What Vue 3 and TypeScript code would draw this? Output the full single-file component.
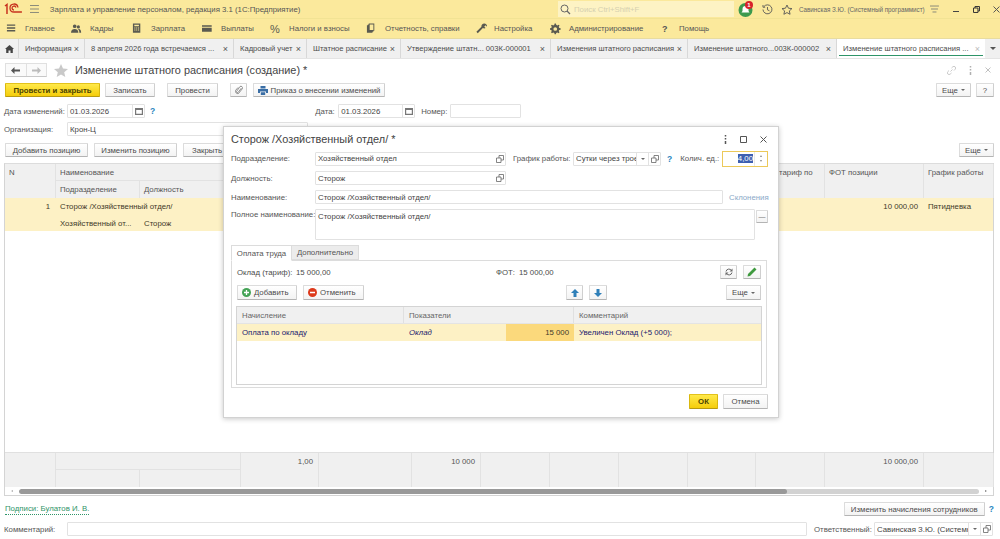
<script setup lang="ts">
interface MenuItem { label: string; icon: string; w: number }
interface TabItem { label: string; w: number; active?: boolean }

const menu: MenuItem[] = [
  { label: 'Главное', icon: 'M1 1h9v1.6H1zM1 4h9v1.6H1zM1 7h9v1.6H1z', w: 65 },
  { label: 'Кадры', icon: 'M4 1a2 2 0 1 1 0 4 2 2 0 0 1 0-4zM8 2a1.7 1.7 0 1 1 0 3.4A1.7 1.7 0 0 1 8 2zM0 10c0-3 2-4 4-4s4 1 4 4zM8.6 6c1.5 0 2.4 1.200 2.400 4H9c0-2-.5-3-1.500-3.600z', w: 61 },
  { label: 'Зарплата', icon: 'M1 0h8v10H1zM2.500 1.500v1.500h5V1.500zM2.500 4.500v1h1.200v-1zM4.500 4.500v1h1.200v-1zM6.500 4.500v1h1.200v-1zM2.500 6.500v1h1.200v-1zM4.500 6.500v1h1.200v-1zM6.500 6.500v1h1.200v-1z', w: 70 },
  { label: 'Выплаты', icon: 'M0 2h10.500v7H0zM0 3.500v1.200h10.500V3.500z', w: 68 },
  { label: 'Налоги и взносы', icon: '', w: 96 },
  { label: 'Отчетность, справки', icon: 'M3 0h6v8H8v1H7v1H1V2h1V1h1zM4 1v6h4V1z', w: 109 },
  { label: 'Настройка', icon: 'M10 0a3 3 0 0 1 3 3.500L11.500 2 10 3.500 11.500 5A3 3 0 0 1 8.500 5L3 10.500 1.500 9 7 3.500A3 3 0 0 1 10 0z', w: 75 },
  { label: 'Администрирование', icon: 'M5 0h1.400l.3 1.500 1.300.6L9.300 1.300l1 1L9.500 3.600l.5 1.400 1.500.3v1.400L10 7l-.5 1.300.8 1.300-1 1-1.300-.8-1.300.5-.3 1.500H5l-.3-1.500-1.300-.5-1.300.8-1-1 .8-1.300L1.400 7 0 6.700V5.300l1.400-.3.500-1.400-.8-1.300 1-1 1.300.8L4.700 1.500zM5.700 4a2 2 0 1 0 0 4 2 2 0 0 0 0-4z', w: 110 },
]

const tabs: TabItem[] = [
  { label: 'Информация', w: 66 },
  { label: '8 апреля 2026 года встречаемся ...', w: 149 },
  { label: 'Кадровый учет', w: 73 },
  { label: 'Штатное расписание', w: 94 },
  { label: 'Утверждение штатн... 003К-000001', w: 150 },
  { label: 'Изменения штатного расписания', w: 137 },
  { label: 'Изменение штатного...003К-000002', w: 149 },
  { label: 'Изменение штатного расписания ...', w: 148, active: true },
]

const headCols: string[] = ['', '', '', '', '', '', '', 'тариф по', 'ФОТ позиции', 'График работы']
const bodyCols: string[] = ['', '', '', '', '', '', '', '', '10 000,00', 'Пятидневка']
const footCols: string[] = ['1,00', '', '10 000', '', '', '', '', '', '10 000,00', '']
</script>

<template>
  <div class="app">
    <header class="titlebar">
      <svg class="logo" width="18" height="12" viewBox="0 0 18 12">
        <path d="M1 3l2-1.500V11" fill="none" stroke="#c8321e" stroke-width="1.500" />
        <path d="M14 4.500A4 4 0 1 0 10 9h8M12 4.500A2 2 0 1 0 10 7" fill="none" stroke="#c8321e" stroke-width="1.300" />
      </svg>
      <svg class="burger" width="9" height="8" viewBox="0 0 9 8"><path d="M0 .5h9M0 4h9M0 7.500h9" stroke="#8a8a7a" stroke-width="1" /></svg>
      <span class="apptitle">Зарплата и управление персоналом, редакция 3.1 (1С:Предприятие)</span>
      <div class="search">
        <svg width="11" height="11" viewBox="0 0 11 11"><circle cx="4.500" cy="4.500" r="3.500" fill="none" stroke="#666" stroke-width="1" /><path d="M7 7l3 3" stroke="#666" stroke-width="1.300" /></svg>
        <span>Поиск Ctrl+Shift+F</span>
      </div>
      <div class="bell">
        <svg width="15" height="15" viewBox="0 0 15 15"><circle cx="7.500" cy="8" r="7" fill="#3c9a4e" /><path d="M7.500 4a3 3 0 0 1 3 3v2l1 1.500h-8L4.500 9V7a3 3 0 0 1 3-3z" fill="#fff" /></svg>
        <b class="badge">1</b>
      </div>
      <svg class="tb-history" width="11" height="11" viewBox="0 0 11 11"><path d="M2 2.500A4.500 4.500 0 1 1 1 5.500M1 1v2.200h2.200M5.500 3v2.800l2 1" fill="none" stroke="#555" stroke-width=".9" /></svg>
      <svg class="tb-star" width="12" height="11" viewBox="0 0 12 11"><path d="M6 1l1.500 3.200 3.500.4-2.600 2.300.7 3.400L6 8.600l-3.100 1.700.7-3.400L1 4.600l3.500-.4z" fill="none" stroke="#555" stroke-width=".9" /></svg>
      <span class="user">Савинская З.Ю. (Системный программист)</span>
      <svg class="tb-menu" width="9" height="9" viewBox="0 0 9 9"><path d="M0 1h9M1 4h7M2.500 7h4" stroke="#8a8a7a" stroke-width="1" /></svg>
      <span class="tb-min"></span>
      <svg class="tb-rest" width="7" height="7" viewBox="0 0 7 7"><path d="M2 2V.5h4.500V5H5M.5 2H5v4.500H.5z" fill="none" stroke="#333" stroke-width="1" /></svg>
      <svg class="tb-close" width="7" height="7" viewBox="0 0 7 7"><path d="M.5.5l6 6M6.500.5l-6 6" stroke="#555" stroke-width="1" /></svg>
    </header>

    <nav class="sections">
      <div v-for="m in menu" :key="m.label" class="sec" :style="{ width: m.w + 'px' }">
        <span class="secicon">
          <svg v-if="m.icon" width="12" height="12" viewBox="0 0 13 12"><path :d="m.icon" fill="#5a5a50" fill-rule="evenodd" /></svg>
          <b v-else class="pct">%</b>
        </span>
        <span>{{ m.label }}</span>
      </div>
      <div class="sec">
        <span class="secicon"><b class="q">?</b></span>
        <span>Помощь</span>
      </div>
    </nav>

    <div class="tabs">
      <div class="home">
        <svg width="9" height="8" viewBox="0 0 9 8"><path d="M4.500 0L9 4H7.800v4H5.500V5.500h-2V8H1.200V4H0z" fill="#444" /></svg>
      </div>
      <div v-for="t in tabs" :key="t.label" class="tab" :class="{ active: t.active }" :style="{ width: t.w + 'px' }">
        <span class="tabtext">{{ t.label }}</span>
        <span class="tabx">×</span>
      </div>
      <div class="tabmore"><i class="caret dark"></i></div>
    </div>

    <main class="page">
      <div class="headrow">
        <div class="navbtns">
          <span><svg width="9" height="7" viewBox="0 0 9 7"><path d="M3.500 0v2.500H9v2H3.500V7L0 3.500z" fill="#555" /></svg></span>
          <span><svg width="9" height="7" viewBox="0 0 9 7"><path d="M5.500 0v2.500H0v2h5.500V7L9 3.500z" fill="#bbb" /></svg></span>
        </div>
        <svg class="star" width="14" height="13" viewBox="0 0 14 13"><path d="M7 0l2 4.500 5 .5-3.800 3.200L11.300 13 7 10.500 2.700 13l1.100-4.800L0 5l5-.5z" fill="#c9c9c9" /></svg>
        <h1>Изменение штатного расписания (создание) *</h1>
        <div class="headicons">
          <svg width="9" height="9" viewBox="0 0 9 9"><path d="M3.500 5.500l2-2M2 4.500L.8 5.700a1.700 1.700 0 0 0 2.400 2.400L4.500 7M4.500 2L5.800.8a1.700 1.700 0 0 1 2.400 2.400L7 4.500" fill="none" stroke="#c4c4c4" stroke-width=".9" /></svg>
          <svg width="3" height="9" viewBox="0 0 3 9"><path d="M1.500 0v1.500M1.500 3v1.500M1.500 6v3" stroke="#b0b0b0" stroke-width="1.500" /></svg>
          <svg width="6" height="6" viewBox="0 0 6 6"><path d="M.5.500l5 5M5.500.500l-5 5" stroke="#c0c0c0" stroke-width="1" /></svg>
        </div>
      </div>

      <div class="cmdrow">
        <button class="btn yellow w95">Провести и закрыть</button>
        <button class="btn w50 ml5">Записать</button>
        <button class="btn w51 ml12">Провести</button>
        <button class="btn w17 ml12 btnicon">
          <svg width="8" height="10" viewBox="0 0 8 10"><path d="M6.500 3L3 7.500a1 1 0 0 1-1.500-1L5 1.500a1.700 1.700 0 0 1 2.500 2L3.500 8.500A2.400 2.400 0 0 1 .5 5.500L3 2.500" fill="none" stroke="#777" stroke-width=".8" /></svg>
        </button>
        <button class="btn w132 ml6 btnprint">
          <svg width="10" height="9" viewBox="0 0 10 9"><path d="M2.500 0h5v2.500h-5zM0 3h10v4H8V5.500H2V7H0zM2.800 6.200h4.400V9H2.800z" fill="#3a6ea5" /></svg>
          Приказ о внесении изменений
        </button>
        <span class="grow"></span>
        <button class="btn w35">Еще <i class="caret"></i></button>
        <button class="btn w18 ml5">?</button>
      </div>

      <div class="fieldrow">
        <label class="lab w63">Дата изменений:</label>
        <div class="inp w78"><span class="grow">01.03.2026</span><span class="cell"><svg width="8" height="8" viewBox="0 0 8 8"><path d="M0 1h8v7H0zM1.200 3v3.800h5.600V3z" fill="#777" fill-rule="evenodd" /></svg></span></div>
        <span class="help ml5">?</span>
        <label class="lab date-lab">Дата:</label>
        <div class="inp w77"><span class="grow">01.03.2026</span><span class="cell"><svg width="8" height="8" viewBox="0 0 8 8"><path d="M0 1h8v7H0zM1.200 3v3.800h5.600V3z" fill="#777" fill-rule="evenodd" /></svg></span></div>
        <label class="lab num-lab">Номер:</label>
        <div class="inp w71"></div>
      </div>

      <div class="fieldrow org">
        <label class="lab w63">Организация:</label>
        <div class="inp w241">Крон-Ц</div>
      </div>

      <div class="cmdrow list">
        <button class="btn w83">Добавить позицию</button>
        <button class="btn w83 ml6">Изменить позицию</button>
        <button class="btn w83 ml6 btnstart">Закрыть</button>
        <span class="grow"></span>
        <button class="btn w35">Еще <i class="caret"></i></button>
      </div>

      <section class="grid">
        <div class="mgrid ghead">
          <div class="gc sp2">N</div>
          <div class="gc c2">Наименование</div>
          <div v-for="(c, i) in headCols" :key="'h' + i" class="gc sp2" :class="{ tar: c === 'тариф по' }">{{ c }}</div>
          <div class="gc">Подразделение</div>
          <div class="gc">Должность</div>
        </div>
        <div class="mgrid gbody">
          <div class="gc sp2 right">1</div>
          <div class="gc c2 dk">Сторож /Хозяйственный отдел/</div>
          <div v-for="(c, i) in bodyCols" :key="'b' + i" class="gc sp2 dk" :class="{ right: c === '10 000,00' }">{{ c }}</div>
          <div class="gc dk">Хозяйственный от...</div>
          <div class="gc dk">Сторож</div>
        </div>
        <div class="gspacer"></div>
        <div class="mgrid gfoot">
          <div class="gc sp2"></div>
          <div class="gc c2"></div>
          <div v-for="(c, i) in footCols" :key="'f' + i" class="gc sp2 right">{{ c }}</div>
          <div class="gc"></div>
          <div class="gc"></div>
        </div>
        <div class="hscroll">
          <i class="arrow l"></i>
          <div class="track"><div class="thumb"></div></div>
          <i class="arrow r"></i>
        </div>
      </section>

      <div class="signrow">
        <a class="signlink">Подписи: Булатов И. В.</a>
        <span class="grow"></span>
        <button class="btn w141">Изменить начисления сотрудников</button>
        <span class="help ml4">?</span>
      </div>

      <div class="fieldrow comment">
        <label class="lab w63">Комментарий:</label>
        <div class="inp w740"></div>
        <label class="lab resp-lab">Ответственный:</label>
        <div class="inp w119 clipinp">
          <span class="grow clip">Савинская З.Ю. (Системный программист)</span>
          <span class="cell"><i class="caret"></i></span>
          <span class="cell"><svg width="8" height="8" viewBox="0 0 8 8"><path d="M3 3V.5h4.500V5H5M.5 3H5v4.500H.5z" fill="none" stroke="#666" stroke-width=".8" /></svg></span>
        </div>
      </div>
    </main>

    <div class="modal">
      <div class="mtitlebar">
        <h2>Сторож /Хозяйственный отдел/ *</h2>
        <div class="mwin">
          <svg width="3" height="9" viewBox="0 0 3 9"><path d="M1.500 0v1.500M1.500 3v1.500M1.500 6v3" stroke="#555" stroke-width="1.500" /></svg>
          <svg width="7" height="7" viewBox="0 0 7 7"><path d="M.5.500h6v6h-6z" fill="none" stroke="#555" stroke-width="1" /></svg>
          <svg width="7" height="7" viewBox="0 0 7 7"><path d="M.5.500l6 6M6.500.500l-6 6" stroke="#555" stroke-width="1" /></svg>
        </div>
      </div>

      <div class="mrow r1">
        <label class="lab w84">Подразделение:</label>
        <div class="inp w191"><span class="grow">Хозяйственный отдел</span><span class="cell plain"><svg width="8" height="8" viewBox="0 0 8 8"><path d="M3 3V.5h4.500V5H5M.5 3H5v4.500H.5z" fill="none" stroke="#666" stroke-width=".8" /></svg></span></div>
        <label class="lab ml7 w60">График работы:</label>
        <div class="inp w88 clipinp">
          <span class="grow clip">Сутки через трое</span>
          <span class="cell"><i class="caret"></i></span>
          <span class="cell"><svg width="8" height="8" viewBox="0 0 8 8"><path d="M3 3V.5h4.500V5H5M.5 3H5v4.500H.5z" fill="none" stroke="#666" stroke-width=".8" /></svg></span>
        </div>
        <span class="help ml6">?</span>
        <label class="lab qty-lab">Колич. ед.:</label>
        <div class="qty"><span class="grow qtyval"><em>4,00</em></span><span class="spin"><i class="up"></i><i class="down"></i></span></div>
      </div>

      <div class="mrow r2">
        <label class="lab w84">Должность:</label>
        <div class="inp w191"><span class="grow">Сторож</span><span class="cell plain"><svg width="8" height="8" viewBox="0 0 8 8"><path d="M3 3V.5h4.500V5H5M.5 3H5v4.500H.5z" fill="none" stroke="#666" stroke-width=".8" /></svg></span></div>
      </div>

      <div class="mrow r3">
        <label class="lab w84">Наименование:</label>
        <div class="inp w408">Сторож /Хозяйственный отдел/</div>
        <a class="decl">Склонения</a>
      </div>

      <div class="mrow r4">
        <label class="lab w84">Полное наименование:</label>
        <div class="inp area">Сторож /Хозяйственный отдел/</div>
        <button class="btn dash">—</button>
      </div>

      <div class="mtabs">
        <div class="mtab on">Оплата труда</div>
        <div class="mtab">Дополнительно</div>
      </div>

      <div class="panel">
        <div class="totals">
          <span class="t1">Оклад (тариф):</span><span class="t2">15 000,00</span>
          <span class="t3">ФОТ:</span><span class="t4">15 000,00</span>
          <span class="grow"></span>
          <button class="btn w17 btnicon">
            <svg width="8" height="8" viewBox="0 0 8 8"><path d="M1 3.500A3 3 0 0 1 6.500 2.500M7 4.500A3 3 0 0 1 1.500 5.500" fill="none" stroke="#666" stroke-width="1" /><path d="M7.500 0.500v3h-3zM.5 7.500v-3h3z" fill="#666" /></svg>
          </button>
          <button class="btn w18 ml6 btnicon">
            <svg width="10" height="10" viewBox="0 0 10 10"><path d="M7.500.500l2 2L3 9 .5 9.500 1 7z" fill="#3f9a3f" /></svg>
          </button>
        </div>

        <div class="tools">
          <button class="btn w60 btnlead">
            <svg width="9" height="9" viewBox="0 0 9 9"><circle cx="4.500" cy="4.500" r="4.500" fill="#44a356" /><path d="M4.500 2v5M2 4.500h5" stroke="#fff" stroke-width="1.300" /></svg>
            Добавить
          </button>
          <button class="btn w61 ml6 btnlead">
            <svg width="9" height="9" viewBox="0 0 9 9"><circle cx="4.500" cy="4.500" r="4.500" fill="#dd3a1c" /><path d="M2 4.500h5" stroke="#fff" stroke-width="1.500" /></svg>
            Отменить
          </button>
          <span class="tools-gap"></span>
          <button class="btn w17 btnicon"><svg width="8" height="8" viewBox="0 0 8 8"><path d="M4 0l4 4H5.500v4h-3V4H0z" fill="#2f7fb8" /></svg></button>
          <button class="btn w18 ml6 btnicon"><svg width="8" height="8" viewBox="0 0 8 8"><path d="M4 8L0 4h2.500V0h3v4H8z" fill="#2f7fb8" /></svg></button>
          <span class="grow"></span>
          <button class="btn w35">Еще <i class="caret"></i></button>
        </div>

        <div class="ptable">
          <div class="pt-row pt-head">
            <div>Начисление</div><div>Показатели</div><div>Комментарий</div>
          </div>
          <div class="pt-row pt-body">
            <div>Оплата по окладу</div>
            <div class="pt-split"><em>Оклад</em><span class="pt-amount">15 000</span></div>
            <div>Увеличен Оклад (+5 000);</div>
          </div>
        </div>
      </div>

      <div class="mfoot">
        <button class="btn yellow w29">ОК</button>
        <button class="btn w45 ml5">Отмена</button>
      </div>
    </div>
  </div>
</template>

<style>
html, body { margin: 0; padding: 0; background: #fff; overflow: hidden; }
</style>

<style scoped>
.app {
  position: relative;
  width: 1000px;
  height: 539px;
  display: flex;
  flex-direction: column;
  overflow: hidden;
  background: #fff;
  font-family: "Liberation Sans", Arial, sans-serif;
  font-size: 7.8px;
  color: #4b4b4b;
}
.grow { flex: 1; min-width: 0; }
.clip { overflow: hidden; white-space: nowrap; }

/* title bar */
.titlebar { height: 18px; flex: none; display: flex; align-items: center; background: #fbe99c; }
.logo { margin-left: 4px; }
.burger { margin-left: 8px; }
.apptitle { margin-left: 11px; width: 511px; color: #555; white-space: nowrap; }
.search { width: 177px; height: 16px; background: #fdf3c4; display: flex; align-items: center; gap: 3px; padding-left: 2px; box-sizing: border-box; color: #d5d0b0; font-size: 7.8px; }
.bell { position: relative; width: 15px; height: 15px; margin-left: 4px; }
.bell svg { display: block; }
.badge { position: absolute; left: 7px; top: -1px; width: 8px; height: 8px; border-radius: 50%; background: #d8232a; color: #fff; font-size: 6px; line-height: 8px; text-align: center; }
.tb-history { margin-left: 9px; }
.tb-star { margin-left: 8px; }
.user { margin-left: 6px; width: 127px; font-size: 6.3px; color: #666; white-space: nowrap; }
.tb-menu { margin-left: 5px; }
.tb-min { width: 6px; height: 1px; background: #444; margin: 5px 0 0 14px; }
.tb-rest { margin-left: 14px; }
.tb-close { margin-left: 13px; }

/* sections */
.sections { height: 21px; flex: none; display: flex; align-items: center; background: #fbe99c; border-top: 1px solid #f2e394; border-bottom: 1px solid #e8dca0; box-sizing: border-box; padding-left: 6px; color: #555; white-space: nowrap; }
.sec { display: flex; align-items: center; flex: none; }
.secicon { width: 19px; flex: none; display: flex; }
.pct { font-size: 11px; font-weight: 400; color: #5a5a50; }
.q { font-size: 9px; margin-left: 2px; color: #555; }

/* tabs */
.tabs { height: 20px; flex: none; display: flex; background: #f0f0f0; border-bottom: 1px solid #e4e4e4; box-sizing: border-box; white-space: nowrap; font-size: 7.6px; }
.home { width: 19px; display: flex; align-items: center; justify-content: center; border-right: 1px solid #d8d8d8; box-sizing: border-box; }
.tab { display: flex; align-items: center; padding: 0 5px 0 6px; box-sizing: border-box; border-right: 1px solid #d8d8d8; flex: none; position: relative; }
.tabtext { flex: 1; overflow: hidden; }
.tabx { font-size: 9px; color: #555; }
.tab.active { background: #fff; border-right: none; }
.tab.active::after { content: ""; position: absolute; left: 2px; right: 2px; bottom: 2px; height: 1px; background: #2e9468; }
.tab.active .tabx { color: #bbb; }
.tabmore { flex: 1; display: flex; align-items: center; justify-content: center; }

.caret { display: inline-block; width: 0; height: 0; border-left: 2px solid transparent; border-right: 2px solid transparent; border-top: 2px solid #666; vertical-align: middle; }
.caret.dark { border-left-width: 3px; border-right-width: 3px; border-top: 3px solid #555; }

/* page */
.page { flex: 1; min-height: 0; display: flex; flex-direction: column; padding: 0 6px 0 4px; }
.headrow { height: 24px; flex: none; display: flex; align-items: center; padding-bottom: 2px; box-sizing: border-box; }
.navbtns { display: flex; margin-left: 1px; width: 42px; height: 14px; box-sizing: border-box; border: 1px solid #e0e0e0; border-bottom-color: #c8c8c8; background: #fafafa; }
.navbtns span { flex: 1; display: flex; align-items: center; justify-content: center; }
.navbtns span + span { border-left: 1px solid #e0e0e0; }
.star { margin-left: 7px; }
h1 { margin: 0 0 0 7px; font-size: 10.9px; font-weight: 400; color: #444; white-space: nowrap; }
.headicons { margin-left: auto; display: flex; align-items: center; gap: 13px; padding-right: 3px; }

.cmdrow { flex: none; display: flex; align-items: center; height: 14px; padding: 0 0 0 1px; }
.btn { font: inherit; height: 14.5px; padding: 0; margin: 0; flex: none; box-sizing: border-box; border: 1px solid #dcdcdc; border-bottom-color: #b4b4b4; border-right-color: #cfcfcf; background: linear-gradient(#fff, #f3f3f3); color: #4b4b4b; border-radius: 1px; white-space: nowrap; display: inline-flex; align-items: center; justify-content: center; gap: 3px; }
.btn.yellow { background: linear-gradient(#ffe94a, #f5cd0a); border-color: #e3c21b #d9b80e #b89a10; color: #4a4200; font-weight: 700; }
.btnstart { justify-content: flex-start; padding-left: 8px; }
.w17 { width: 17px; } .w18 { width: 18px; } .w29 { width: 29px; } .w35 { width: 35px; } .w45 { width: 45px; }
.w50 { width: 50px; } .w51 { width: 51px; } .w60 { width: 60px; } .w61 { width: 61px; } .w83 { width: 83px; }
.w95 { width: 95px; } .w132 { width: 132px; } .w141 { width: 141px; }
.ml4 { margin-left: 4px; } .ml5 { margin-left: 5px; } .ml6 { margin-left: 6px; } .ml7 { margin-left: 7px; } .ml12 { margin-left: 12px; }
.help { color: #2a86c0; font-weight: 700; font-size: 8.5px; }

.fieldrow { flex: none; display: flex; align-items: center; height: 14px; margin-top: 7px; }
.fieldrow.org { margin-top: 4px; }
.lab { white-space: nowrap; flex: none; color: #555; }
.w63 { width: 63px; }
.inp { height: 14px; box-sizing: border-box; border: 1px solid #e2e2e2; border-radius: 1px; background: #fff; display: flex; align-items: center; padding-left: 2px; color: #444; flex: none; white-space: nowrap; }
.w71 { width: 71px; } .w77 { width: 77px; } .w78 { width: 78px; } .w119 { width: 119px; } .w241 { width: 241px; } .w740 { width: 740px; }
.w84 { width: 84px; } .w88 { width: 88px; } .w191 { width: 191px; } .w408 { width: 408px; }
.cell { width: 11px; flex: none; height: 100%; border-left: 1px solid #e2e2e2; display: flex; align-items: center; justify-content: center; }
.cell.plain { border-left: none; }
.clipinp { padding-right: 0; }
.date-lab { margin-left: 160px; width: 23px; }
.num-lab { margin-left: 6px; width: 29px; }

.cmdrow.list { margin-top: 7px; }

/* main grid */
.grid { flex: 1; min-height: 0; margin-top: 6px; display: flex; flex-direction: column; border: 1px solid #d4d4d4; border-top-color: #dcdcdc; box-sizing: border-box; }
.mgrid { display: grid; grid-template-columns: 51px 84px 101px 78px 93px 69px 69px 69px 69px 68px 69px 99px 70px; flex: none; }
.ghead { grid-template-rows: 17px 17px; background: #f0f0f0; }
.gbody { grid-template-rows: 16.500px 16.500px; background: #fdf1c5; }
.gfoot { grid-template-rows: 17px 17px; background: #f0f0f0; border-top: 1px solid #e0e0e0; }
.gspacer { flex: 1; }
.gc { box-sizing: border-box; border-right: 1px solid #e2e2e2; padding: 3px 5px 0 4px; white-space: nowrap; overflow: hidden; color: #555; line-height: 11px; }
.gc.c2 { border-bottom: 1px solid #e2e2e2; }
.gbody .gc, .gbody .gc.c2 { border-color: transparent; color: #3f3a2a; overflow: visible; }
.sp2 { grid-row: span 2; }
.c2 { grid-column: span 2; }
.right { text-align: right; }
.tar { padding-left: 23px; }
.hscroll { height: 8px; flex: none; display: flex; align-items: center; background: #fff; }
.arrow { width: 0; height: 0; flex: none; border-top: 1.500px solid transparent; border-bottom: 1.500px solid transparent; }
.arrow.l { border-right: 2px solid #aaa; margin: 0 6px 0 6px; }
.arrow.r { border-left: 2px solid #777; margin: 0 6px 0 6px; }
.track { flex: 1; height: 5px; background: #d2d2d2; border-radius: 3px; overflow: hidden; }
.thumb { width: 80%; height: 100%; background: #999; border-radius: 3px; }

.signrow { flex: none; height: 26px; display: flex; align-items: center; padding-right: 0; padding-left: 1px; }
.signlink { color: #2f9468; border-bottom: 1px dotted #2f9468; line-height: 10px; }

.fieldrow.comment { margin: 0 0 3px; }
.resp-lab { margin-left: 7px; width: 60px; }

/* modal */
.modal { position: absolute; left: 223px; top: 126px; width: 556px; height: 292px; box-sizing: border-box; background: #fff; border: 1px solid #d2d2d2; box-shadow: 0 1px 5px rgba(0, 0, 0, .22); padding: 0 10px 0 7px; display: flex; flex-direction: column; }
.mtitlebar { height: 24px; flex: none; display: flex; align-items: center; }
h2 { margin: 0; font-size: 10.9px; font-weight: 400; color: #444; }
.mwin { margin-left: auto; margin-right: 1px; display: flex; align-items: center; gap: 13px; }
.mrow { display: flex; flex: none; align-items: center; }
.r1 { height: 15px; }
.w60 { width: 60px; }
.qty-lab { margin-left: 8px; width: 42px; }
.qty { width: 50px; height: 16px; box-sizing: border-box; border: 1px solid #ecc95a; display: flex; align-items: center; background: #fff; }
.qtyval { text-align: right; padding-right: 1px; }
.qtyval em { font-style: normal; background: #3d5fb0; color: #fff; }
.spin { width: 12px; height: 100%; border-left: 1px solid #e8e8e8; display: flex; flex-direction: column; align-items: center; justify-content: center; gap: 3px; }
.up { border-left: 1.500px solid transparent; border-right: 1.500px solid transparent; border-bottom: 2px solid #888; }
.down { border-left: 1.500px solid transparent; border-right: 1.500px solid transparent; border-top: 2px solid #888; }
.r2 { margin-top: 5px; }
.r3 { margin-top: 5px; }
.decl { margin-left: 6px; color: #8aa9c8; white-space: nowrap; }
.r4 { margin-top: 5px; align-items: flex-start; }
.r4 .lab { padding-top: 1px; }
.area { width: 440px; height: 31px; align-items: flex-start; padding-top: 2px; }
.dash { width: 12px; height: 13px; margin: 1px 0 0 1px; color: #777; font-size: 7px; }

.mtabs { display: flex; margin-top: 5px; flex: none; height: 15px; position: relative; z-index: 1; }
.mtab { padding: 0; box-sizing: border-box; display: flex; align-items: center; justify-content: center; color: #555; }
.mtab:first-child { width: 61px; }
.mtab:last-child { width: 67px; }
.mtab.on { background: #fff; border: 1px solid #dcdcdc; border-bottom: 1px solid #fff; height: 16px; }
.mtab:not(.on) { background: #ececec; border: 1px solid #dcdcdc; border-left: none; }
.panel { flex: none; height: 128px; box-sizing: border-box; border: 1px solid #dcdcdc; padding: 3px 5px 0; display: flex; flex-direction: column; width: 536px; }
.totals { display: flex; align-items: center; height: 16px; flex: none; white-space: nowrap; }
.t1 { width: 59px; }
.t2 { width: 200px; }
.t3 { width: 23px; }
.t4 { color: #4b4b4b; }
.tools { display: flex; align-items: center; height: 15px; margin-top: 5px; flex: none; }
.tools-gap { width: 202px; flex: none; }
.btnlead { justify-content: flex-start; padding-left: 4px; }
.ptable { margin-top: 6px; height: 79px; box-sizing: border-box; width: 526px; margin-left: -1px; border: 1px solid #d4d4d4; flex: none; }
.pt-row { display: grid; grid-template-columns: 167px 170px 1fr; }
.pt-head { height: 17px; background: #f0f0f0; border-bottom: 1px solid #e4e4e4; box-sizing: border-box; }
.pt-head > div { padding: 0 5px; display: flex; align-items: center; border-right: 1px solid #e0e0e0; color: #666; }
.pt-head > div:last-child { border-right: none; }
.pt-body { height: 17px; background: #fdf1c5; color: #231a6e; }
.pt-body > div { padding: 0 5px; display: flex; align-items: center; }
.pt-split { padding: 0 !important; }
.pt-split em { padding-left: 5px; width: 102px; box-sizing: border-box; flex: none; }
.pt-amount { flex: 1; height: 100%; background: #fbd97c; text-align: right; padding-right: 5px; line-height: 17px; color: #3f3a2a; }

.mfoot { flex: none; margin-top: 6px; display: flex; justify-content: flex-end; }
</style>
